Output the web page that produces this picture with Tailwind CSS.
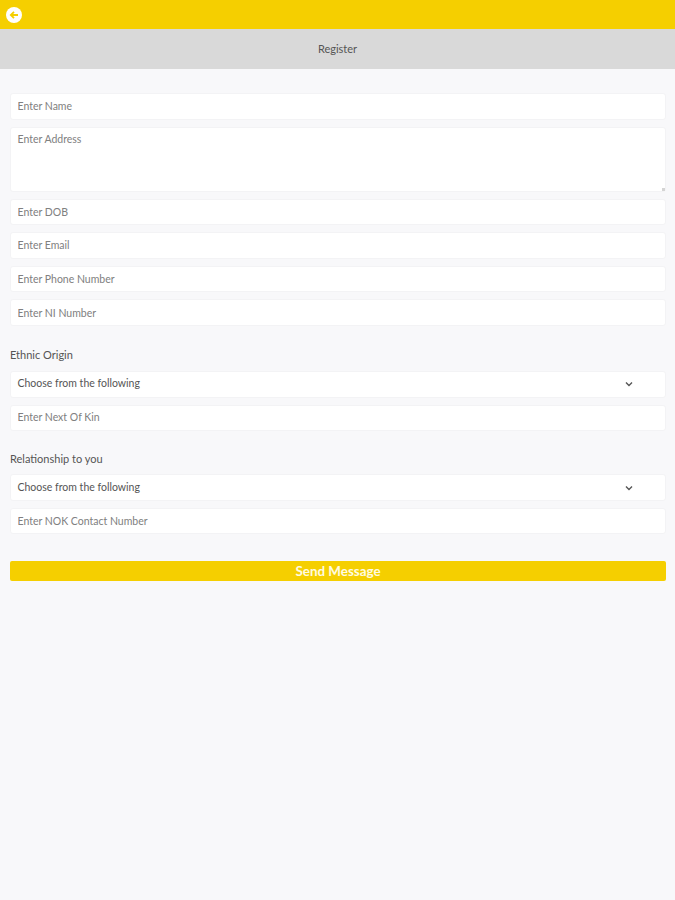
<!DOCTYPE html>
<html lang="en">
<head>
    <meta charset="UTF-8">
    <meta name="viewport" content="width=device-width, initial-scale=1.0">
    <title>Register</title>
    <script src="https://cdn.jsdelivr.net/npm/@tailwindcss/browser@4"></script>
</head>
<body class="bg-[#f8f8fa] font-['Lato',sans-serif] h-[900px] overflow-hidden">
    <header class="h-[29px] bg-[#f5cf00] flex items-center pl-[6px]">
        <svg class="w-4 h-4" viewBox="0 0 16 16">
            <circle cx="8" cy="8" r="8" fill="#fff"/>
            <path d="M12 8H5M8 4.8 4.8 8 8 11.2" fill="none" stroke="#f5cf00" stroke-width="1.8"/>
        </svg>
    </header>
    <div class="h-[40px] bg-[#d9d9d9] flex items-center justify-center text-[11px] text-[#555]">Register</div>

    <form class="pl-[10px] pr-[9px] pt-[24px] flex flex-col">
        <input class="h-[26.6px] px-[6.5px] pb-[1px] bg-white rounded-[3px] border border-[#f3f3f5] text-[10.5px] placeholder:text-[#808080]" placeholder="Enter Name">
        <div class="relative h-[65px] mt-[7px]">
            <textarea class="block w-full h-full resize-none px-[6.5px] py-[4.5px] bg-white rounded-[3px] border border-[#f3f3f5] text-[10.5px] placeholder:text-[#808080]" placeholder="Enter Address"></textarea>
            <span class="absolute right-[1px] bottom-[1px] w-[3px] h-[3px] bg-[#d4d4d4]"></span>
        </div>
        <input class="h-[26.6px] mt-[7px] px-[6.5px] bg-white rounded-[3px] border border-[#f3f3f5] text-[10.5px] placeholder:text-[#808080]" placeholder="Enter DOB">
        <input class="h-[26.6px] mt-[7px] px-[6.5px] pb-[1px] bg-white rounded-[3px] border border-[#f3f3f5] text-[10.5px] placeholder:text-[#808080]" placeholder="Enter Email">
        <input class="h-[26.6px] mt-[7px] px-[6.5px] pb-[1px] bg-white rounded-[3px] border border-[#f3f3f5] text-[10.5px] placeholder:text-[#808080]" placeholder="Enter Phone Number">
        <input class="h-[26.6px] mt-[7px] px-[6.5px] bg-white rounded-[3px] border border-[#f3f3f5] text-[10.5px] placeholder:text-[#808080]" placeholder="Enter NI Number">

        <label class="mt-[21px] h-[16px] leading-[16px] text-[11px] text-[#555]">Ethnic Origin</label>
        <div class="h-[26.6px] mt-[8px] px-[6.5px] pb-[1px] bg-white rounded-[3px] border border-[#f3f3f5] text-[10.5px] text-[#555] flex items-center justify-between">
            <span>Choose from the following</span>
            <svg class="w-[8px] h-[6px] mr-[26px]" viewBox="0 0 8 6"><path d="M1 1.5 4 4.5 7 1.5" fill="none" stroke="#555" stroke-width="1.4"/></svg>
        </div>
        <input class="h-[26.6px] mt-[7px] px-[6.5px] pb-[1px] bg-white rounded-[3px] border border-[#f3f3f5] text-[10.5px] placeholder:text-[#808080]" placeholder="Enter Next Of Kin">

        <label class="mt-[20px] h-[16px] leading-[16px] text-[11px] text-[#555]">Relationship to you</label>
        <div class="h-[26.6px] mt-[7px] px-[6.5px] pt-[1px] bg-white rounded-[3px] border border-[#f3f3f5] text-[10.5px] text-[#555] flex items-center justify-between">
            <span>Choose from the following</span>
            <svg class="w-[8px] h-[6px] mr-[26px]" viewBox="0 0 8 6"><path d="M1 1.5 4 4.5 7 1.5" fill="none" stroke="#555" stroke-width="1.4"/></svg>
        </div>
        <input class="h-[26.6px] mt-[7px] px-[6.5px] pb-[1px] bg-white rounded-[3px] border border-[#f3f3f5] text-[10.5px] placeholder:text-[#808080]" placeholder="Enter NOK Contact Number">

        <button type="button" class="h-[20px] mt-[26.6px] bg-[#f5cf00] rounded-[2px] text-[#fffbe0] text-[13.4px] font-bold leading-[20px]">Send Message</button>
    </form>
</body>
</html>
